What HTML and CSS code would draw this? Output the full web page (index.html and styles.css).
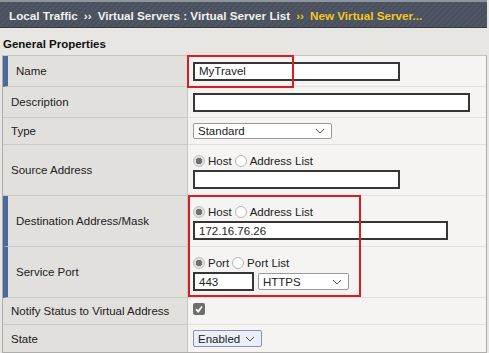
FILE: index.html
```html
<!DOCTYPE html>
<html>
<head>
    <title>New Virtual Server</title>
    <link rel="stylesheet" href="styles.css">
</head>
<body>
    <div class="breadcrumb">
        <span>Local Traffic</span>
        <span class="sep">&rsaquo;&rsaquo;</span>
        <span>Virtual Servers : Virtual Server List</span>
        <span class="sep current">&rsaquo;&rsaquo;</span>
        <span class="current">New Virtual Server...</span>
    </div>

    <h3 class="section-title">General Properties</h3>

    <div class="props">
        <div class="prop-row required">
            <div class="prop-label">Name</div>
            <div class="prop-value">
                <input type="text" class="text-input w-name" value="MyTravel">
            </div>
        </div>

        <div class="prop-row">
            <div class="prop-label">Description</div>
            <div class="prop-value">
                <input type="text" class="text-input w-desc" value="">
            </div>
        </div>

        <div class="prop-row short">
            <div class="prop-label">Type</div>
            <div class="prop-value">
                <div class="select w-type">
                    <span>Standard</span>
                    <svg width="10" height="6" viewBox="0 0 10 6"><polyline points="1,1 5,5 9,1" fill="none" stroke="#555" stroke-width="1"/></svg>
                </div>
            </div>
        </div>

        <div class="prop-row tall">
            <div class="prop-label">Source Address</div>
            <div class="prop-value stacked">
                <div class="radio-line">
                    <span class="radio on"></span><span>Host</span>
                    <span class="radio"></span><span>Address List</span>
                </div>
                <input type="text" class="text-input w-name" value="">
            </div>
        </div>

        <div class="prop-row tall required">
            <div class="prop-label">Destination Address/Mask</div>
            <div class="prop-value stacked">
                <div class="radio-line">
                    <span class="radio on"></span><span>Host</span>
                    <span class="radio"></span><span>Address List</span>
                </div>
                <input type="text" class="text-input w-dest" value="172.16.76.26">
            </div>
        </div>

        <div class="prop-row tall required">
            <div class="prop-label">Service Port</div>
            <div class="prop-value stacked">
                <div class="radio-line">
                    <span class="radio on"></span><span>Port</span>
                    <span class="radio"></span><span>Port List</span>
                </div>
                <div class="port-line">
                    <input type="text" class="text-input w-port" value="443">
                    <div class="select w-proto">
                        <span>HTTPS</span>
                        <svg width="10" height="6" viewBox="0 0 10 6"><polyline points="1,1 5,5 9,1" fill="none" stroke="#555" stroke-width="1"/></svg>
                    </div>
                </div>
            </div>
        </div>

        <div class="prop-row short">
            <div class="prop-label">Notify Status to Virtual Address</div>
            <div class="prop-value">
                <span class="checkbox">
                    <svg width="10" height="10" viewBox="0 0 10 10"><polyline points="2,5.2 4.2,7.5 8,2.5" fill="none" stroke="#fff" stroke-width="1.8"/></svg>
                </span>
            </div>
        </div>

        <div class="prop-row short last">
            <div class="prop-label">State</div>
            <div class="prop-value">
                <div class="select w-state">
                    <span>Enabled</span>
                    <svg width="10" height="6" viewBox="0 0 10 6"><polyline points="1,1 5,5 9,1" fill="none" stroke="#555" stroke-width="1"/></svg>
                </div>
            </div>
        </div>

        <!-- red callouts drawn over the form -->
        <div class="callout callout-name"></div>
        <div class="callout callout-dest"></div>
    </div>
</body>
</html>
```

FILE: styles.css
```css
/* Page */
body {
    margin: 0;
    background-color: #e8e6e2;
    font-family: "Liberation Sans", Arial, sans-serif;
    font-size: 11.5px;
    color: #222;
}

/* Breadcrumb bar */
.breadcrumb {
    margin-right: 2px;
    padding: 2px 0 0 9px;
    box-sizing: border-box;
    height: 28px;
    border-top: 2px solid #8e949c;
    border-bottom: 1px solid #363b43;
    background: repeating-linear-gradient(135deg, #4f5664 0 2px, #4a505d 2px 4px);
    color: #f0f0f0;
    font-size: 11.7px;
    font-weight: bold;
    display: flex;
    align-items: center;
    gap: 6px;
}

.breadcrumb .current {
    color: #f3c623;
}

.section-title {
    margin: 0;
    padding: 10px 3px 4px;
    font-size: 11.5px;
    line-height: 13px;
    font-weight: bold;
    color: #111;
}

/* Properties table */
.props {
    position: relative;
    margin: 0 2px;
    border: 1px solid #aeada9;
    border-top-color: #c6c4bf;
}

.prop-row {
    display: grid;
    grid-template-columns: 185px 1fr;
    height: 31px;
}

.prop-row.short {
    height: 27px;
}

.prop-row.tall {
    height: 51px;
}

.prop-label {
    background-color: #e1e0dc;
    border-right: 1px solid #c8c6c1;
    border-bottom: 1px solid #cbc9c4;
    padding-left: 8px;
    display: flex;
    align-items: center;
}

.required .prop-label {
    border-left: 5px solid #4a6a9c;
}

.prop-value {
    background-color: #f5f4f2;
    border-bottom: 1px solid #e0dfdb;
    padding-left: 5px;
    display: flex;
    align-items: center;
}

.last .prop-label, .last .prop-value {
    border-bottom: none;
}

.prop-value.stacked {
    flex-direction: column;
    align-items: flex-start;
    padding-top: 9px;
    gap: 3px;
}

/* Controls */
.text-input {
    height: 19px;
    box-sizing: border-box;
    border: 2px solid #363636;
    border-radius: 0;
    background: #fff;
    padding: 0 4px;
    font-family: inherit;
    font-size: 11.5px;
    color: #222;
    margin: 0;
}

.w-name { width: 207px; }
.w-desc { width: 277px; }
.w-dest { width: 255px; }
.w-port { width: 61px; }

.select {
    height: 17px;
    box-sizing: border-box;
    border: 1px solid #9a9a9a;
    border-radius: 2px;
    background: #fff;
    padding: 0 6px 0 4px;
    display: flex;
    align-items: center;
    justify-content: space-between;
}

.w-type { width: 139px; height: 16px; }
.w-proto { width: 91px; }
.w-state {
    width: 69px;
    background: #e9eef8;
    border-color: #8592b0;
}

.radio-line {
    height: 13px;
    display: flex;
    align-items: center;
    gap: 3px;
}

.radio {
    width: 12px;
    height: 12px;
    box-sizing: border-box;
    border: 1px solid #b5b5b5;
    border-radius: 50%;
    background: #fff;
}

.radio.on {
    background: radial-gradient(circle, #707070 0 3px, #dedede 3.5px);
    border-color: #c2c2c2;
}

.port-line {
    display: flex;
    align-items: center;
    gap: 4px;
}

.checkbox {
    width: 12px;
    height: 12px;
    border-radius: 2px;
    background: #6e6e6e;
    display: flex;
    align-items: center;
    justify-content: center;
    margin-top: -4px;
}

/* Highlight callouts */
.callout {
    position: absolute;
    border: 2px solid #e01a1f;
}

.callout-name {
    left: 184px;
    top: -1px;
    width: 103px;
    height: 29px;
}

.callout-dest {
    left: 185px;
    top: 139px;
    width: 169px;
    height: 98px;
}
```
